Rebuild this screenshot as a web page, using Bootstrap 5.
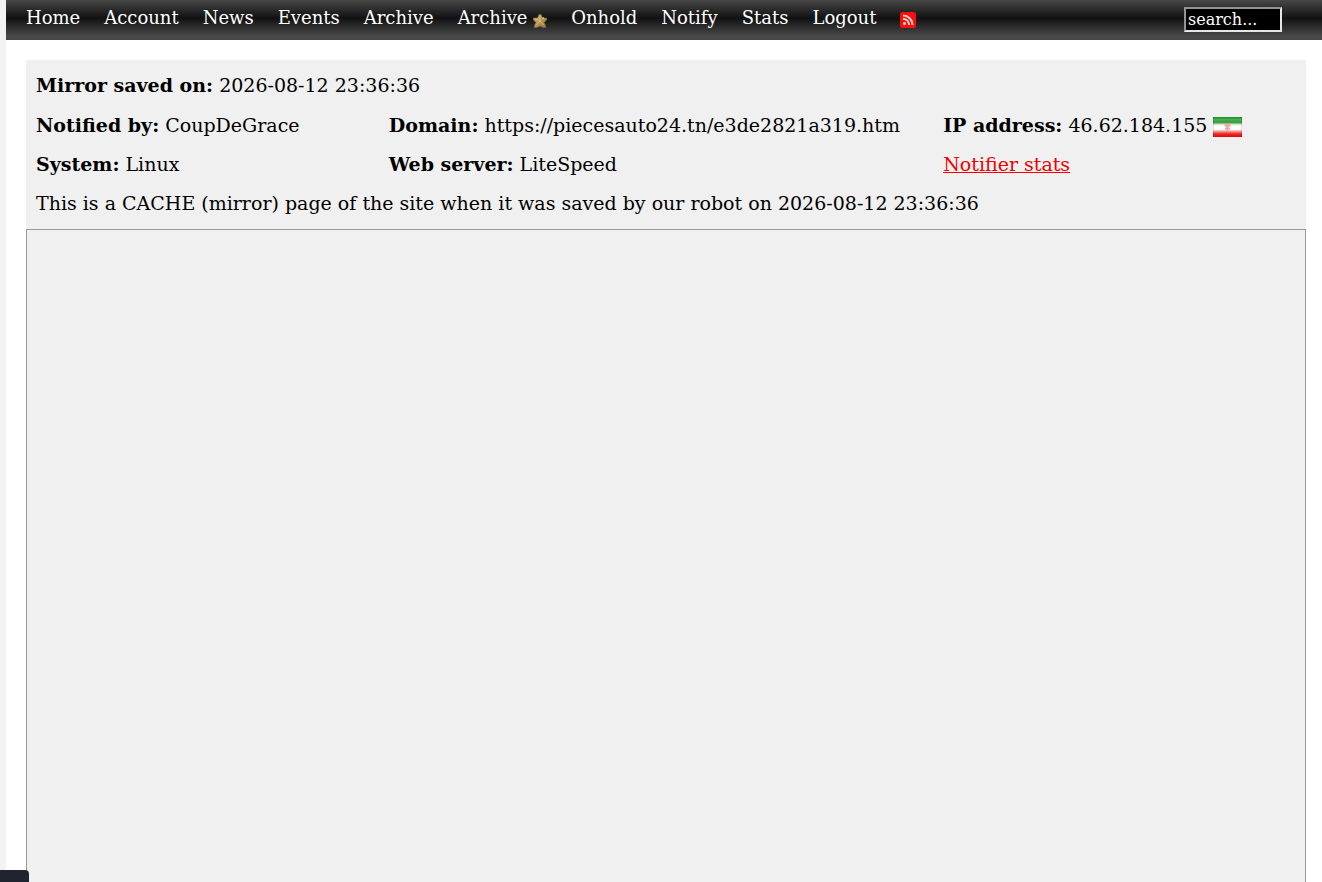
<!DOCTYPE html>
<html lang="en">
<head>
<meta charset="utf-8">
<meta name="viewport" content="width=device-width, initial-scale=1">
<title>Mirror saved on 2026-08-12</title>
<link href="https://cdn.jsdelivr.net/npm/bootstrap@5.3.0/dist/css/bootstrap.min.css" rel="stylesheet">
<script src="https://cdn.jsdelivr.net/npm/bootstrap@5.3.0/dist/js/bootstrap.bundle.min.js" defer></script>
<style>
  body { font-family: "DejaVu Serif", serif; color: #000; border-left: 6px solid #f3f3f3; background: #fff; }
  .topbar { min-height: 40px; padding: 0 40px 0 20px; background: linear-gradient(#484848, #111 45%, #484848 90%); }
  .topbar a { color: #fff; font-size: 18px; line-height: 24px; text-decoration: none; }
  .topbar ul { column-gap: 24px; padding-top: 6px; }
  .topbar svg { vertical-align: -4px; }
  .topbar form { padding-top: 7px; }
  .searchbox { width: 98px; height: 25px; padding: 0 2px; background: #000; color: #fff; font-size: 16px; line-height: 20px; border: 2px solid; border-color: #949494 #e6e6e6 #e6e6e6 #949494; border-radius: 0; }
  .searchbox::placeholder { color: #fff; opacity: 1; }
  main { padding: 20px 16px 0 20px; }
  .mirror { background: #f0f0f0; }
  .info { padding: 6px 10px; font-size: 19px; line-height: 39px; }
  .cols { display: grid; grid-template-columns: 28fr 44fr 28fr; padding-top: 1px; }
  .info a { color: #f00000; }
  .info svg { vertical-align: -5px; }
  .frame { border: 1px solid #999; border-bottom: 0; }
  .corner { width: 29px; height: 12px; background: #20242e; border-top-right-radius: 4px; }
</style>
</head>
<body class="d-flex flex-column min-vh-100">
  <nav class="topbar d-flex justify-content-between align-items-start" aria-label="Main">
    <ul class="list-unstyled d-flex flex-wrap mb-0">
      <li><a href="#">Home</a></li>
      <li><a href="#">Account</a></li>
      <li><a href="#">News</a></li>
      <li><a href="#">Events</a></li>
      <li><a href="#">Archive</a></li>
      <li><a href="#">Archive <svg width="14" height="14" viewBox="0 0 14 14" aria-hidden="true"><defs><linearGradient id="gold" x2="1" y2="1"><stop stop-color="#d2b071"/><stop offset=".5" stop-color="#b99555"/><stop offset="1" stop-color="#8f6f40"/></linearGradient></defs><path d="M6 .5h2l1.500 3.500h4v2l-2.500 2.500 1.500 3v2h-2L7 12l-3.500 1.500h-2v-2l1.500-3L.5 6V4h4z" fill="url(#gold)" stroke="#927449" stroke-width=".6" stroke-linejoin="round"/><path d="M7 2.500V7l3.500 4M7 7l-3.500 4M7 7 2.500 5" stroke="#d9bd83" fill="none"/><path d="M9.500 4h1.500" stroke="#fff"/></svg></a></li>
      <li><a href="#">Onhold</a></li>
      <li><a href="#">Notify</a></li>
      <li><a href="#">Stats</a></li>
      <li><a href="#">Logout</a></li>
      <li><a href="#" aria-label="RSS"><svg width="16" height="16" viewBox="0 0 16 16" aria-hidden="true"><rect width="16" height="16" rx="2" fill="#f8100c"/><circle cx="4.500" cy="11.500" r="1.500" fill="#fbdcda"/><path d="M3 7a5.500 5.500 0 0 1 6 6M3 3.500A9.500 9.500 0 0 1 12.500 13" fill="none" stroke="#fbd0ce" stroke-width="2"/></svg></a></li>
    </ul>
    <form><input class="searchbox d-block" type="text" placeholder="search..." aria-label="Search"></form>
  </nav>
  <main class="flex-grow-1 d-flex flex-column">
    <div class="mirror flex-grow-1 d-flex flex-column">
      <section class="info">
        <div><strong>Mirror saved on:</strong> 2026-08-12 23:36:36</div>
        <div class="cols">
          <div><strong>Notified by:</strong> CoupDeGrace</div>
          <div><strong>Domain:</strong> https://piecesauto24.tn/e3de2821a319.htm</div>
          <div><strong>IP address:</strong> 46.62.184.155 <svg width="29" height="20" viewBox="0 0 29 20" role="img" aria-label="Iran"><defs><linearGradient id="iran" x2="0" y2="1"><stop stop-color="#168a24"/><stop offset=".12" stop-color="#4aad52"/><stop offset=".27" stop-color="#389b40"/><stop offset=".38" stop-color="#d5e8d5"/><stop offset=".44" stop-color="#fff"/><stop offset=".62" stop-color="#fff"/><stop offset=".74" stop-color="#f78080"/><stop offset=".85" stop-color="#ee2525"/><stop offset="1" stop-color="#d90c0c"/></linearGradient></defs><path fill="url(#iran)" d="M0 0h29v20H0z"/><path d="M.5 0v20M28.500 0v20" stroke="#000" stroke-opacity=".12"/><path d="M14.500 6.500v7M11.500 8.500h6M12 11.500h5" fill="none" stroke="#f28c8c" stroke-width="2" stroke-opacity=".8"/></svg></div>
          <div><strong>System:</strong> Linux</div>
          <div><strong>Web server:</strong> LiteSpeed</div>
          <div><a href="#">Notifier stats</a></div>
        </div>
        <div>This is a CACHE (mirror) page of the site when it was saved by our robot on 2026-08-12 23:36:36</div>
      </section>
      <div class="frame flex-grow-1"></div>
    </div>
  </main>
  <div class="corner position-fixed bottom-0 start-0"></div>
</body>
</html>
